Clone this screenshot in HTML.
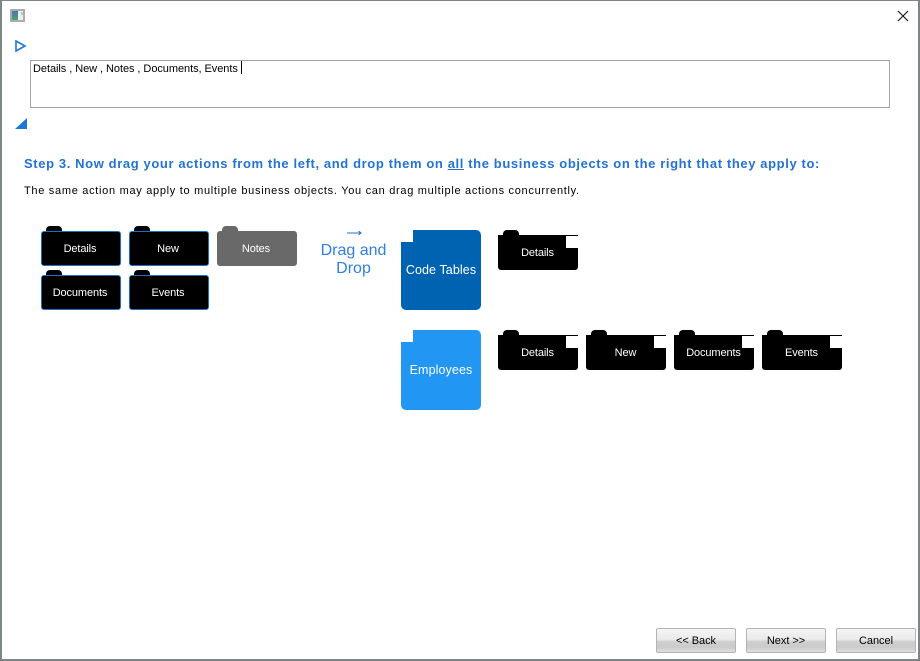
<!DOCTYPE html>
<html>
<head>
<meta charset="utf-8">
<style>
html,body{margin:0;padding:0;background:#fff}
body{width:920px;height:661px;position:relative;overflow:hidden;font-family:"Liberation Sans",sans-serif}
#frame{position:absolute;left:0;top:0;width:916px;height:658px;border:solid #7e8585;border-width:1px 2px 2px 2px;background:#fff}
.a{position:absolute;white-space:nowrap}
.f{position:absolute;width:80px;height:35px;box-sizing:border-box;background:#000;border:1px solid #1f6fc4;border-radius:3px;color:#fff;font-size:11px;line-height:34px;text-align:center;letter-spacing:-.12px;text-indent:-2px}
.t{position:absolute;width:16px;height:6px;background:#000;border-radius:4px 4px 0 0}
.g{background:#696969;border-color:#696969}
.o{position:absolute;width:80px;height:35px;background:#000;border-radius:0 0 3px 3px;color:#fff;font-size:11px;line-height:37px;text-align:center;letter-spacing:-.12px;text-indent:-1px}
.o i{position:absolute;right:0;top:1px;width:12px;height:12px;background:#fff}
.o:before{content:"";position:absolute;left:5px;top:-5px;width:16px;height:6px;background:#000;border-radius:4px 4px 0 0}
.big{position:absolute;width:80px;height:80px;border-radius:5px;color:#fff;font-size:12.5px;line-height:81px;text-align:center;letter-spacing:.1px}
.big i{position:absolute;left:0;top:0;width:12px;height:12px;background:#fff}
.btn{position:absolute;top:628px;width:80px;height:25px;box-sizing:border-box;border:1px solid #b4b4b4;border-radius:2px;background:linear-gradient(#f4f4f4 0,#ebebeb 45%,#cfcfcf 55%,#cbcbcb 80%,#dedede 100%);font-size:11px;line-height:25px;text-align:center;color:#000;letter-spacing:-.05px}
</style>
</head>
<body>
<div id="frame"></div>

<svg class="a" style="left:10px;top:9px" width="16" height="14" viewBox="0 0 16 14">
<defs><linearGradient id="ic" x1="0" y1="0" x2="0" y2="1"><stop offset="0" stop-color="#4d74a8"/><stop offset="1" stop-color="#45a67e"/></linearGradient></defs>
<rect x="1" y="1" width="13" height="11" fill="#eeeeee" stroke="#acacac" stroke-width="2"/>
<rect x="2" y="2" width="6" height="9" fill="url(#ic)"/>
<rect x="11" y="3" width="2" height="3" fill="#b9c6d4"/>
</svg>

<svg class="a" style="left:897px;top:10px" width="12" height="12" viewBox="0 0 12 12">
<path d="M1 1L11 11M11 1L1 11" stroke="#111" stroke-width="1.1" fill="none"/>
</svg>

<svg class="a" style="left:15px;top:40px" width="12" height="12" viewBox="0 0 12 12">
<path d="M1 1L10 6L1 11Z" fill="none" stroke="#1c78d8" stroke-width="1.6"/>
</svg>

<div class="a" style="left:30px;top:60px;width:858px;height:46px;border:1px solid #a5a5a5;background:#fff"></div>
<div class="a" style="left:33px;top:62px;font-size:11px;line-height:14px;color:#000;letter-spacing:-.06px">Details , New , Notes , Documents, Events</div>
<div class="a" style="left:241px;top:61px;width:1px;height:13px;background:#000"></div>

<svg class="a" style="left:15px;top:118px" width="12" height="12" viewBox="0 0 12 12">
<path d="M12 0V11H0Z" fill="#1c78d8"/>
</svg>

<div class="a" style="left:24px;top:155px;font-size:13px;line-height:17px;font-weight:bold;color:#2273d2;letter-spacing:.613px">Step 3. Now drag your actions from the left, and drop them on <u>all</u> the business objects on the right that they apply to:</div>
<div class="a" style="left:24px;top:184px;font-size:11px;line-height:14px;color:#000;letter-spacing:.7px">The same action may apply to multiple business objects. You can drag multiple actions concurrently.</div>

<div class="t" style="left:46px;top:226px"></div>
<div class="f" style="left:41px;top:231px">Details</div>
<div class="t" style="left:134px;top:226px"></div>
<div class="f" style="left:129px;top:231px">New</div>
<div class="t g" style="left:222px;top:226px"></div>
<div class="f g" style="left:217px;top:231px">Notes</div>
<div class="t" style="left:46px;top:270px"></div>
<div class="f" style="left:41px;top:275px">Documents</div>
<div class="t" style="left:134px;top:270px"></div>
<div class="f" style="left:129px;top:275px">Events</div>

<svg class="a" style="left:346px;top:228px" width="16" height="10" viewBox="0 0 16 10">
<path d="M1 5H15M12.5 3L15 5L12.5 7" fill="none" stroke="#2273d2" stroke-width="1"/>
</svg>
<div class="a" style="left:313px;top:242px;width:81px;text-align:center;font-size:16px;line-height:18px;color:#2f80e0;white-space:normal">Drag and Drop</div>

<div class="big" style="left:401px;top:230px;background:#0063b1">Code Tables<i></i></div>
<div class="big" style="left:401px;top:330px;background:#2196f3">Employees<i></i></div>

<div class="o" style="left:498px;top:235px">Details<i></i></div>
<div class="o" style="left:498px;top:335px">Details<i></i></div>
<div class="o" style="left:586px;top:335px">New<i></i></div>
<div class="o" style="left:674px;top:335px">Documents<i></i></div>
<div class="o" style="left:762px;top:335px">Events<i></i></div>

<div class="btn" style="left:656px">&lt;&lt; Back</div>
<div class="btn" style="left:746px">Next &gt;&gt;</div>
<div class="btn" style="left:836px">Cancel</div>
</body>
</html>
